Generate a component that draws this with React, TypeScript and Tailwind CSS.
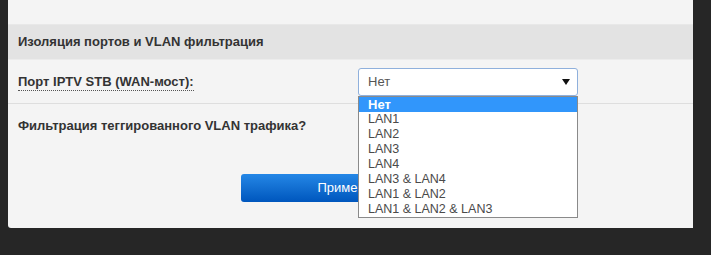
import React from 'react';

const options = ['Нет', 'LAN1', 'LAN2', 'LAN3', 'LAN4', 'LAN3 & LAN4', 'LAN1 & LAN2', 'LAN1 & LAN2 & LAN3'];

export default function App() {
  return (
    <div className="w-[711px] h-[255px] bg-[#262626] pl-2 overflow-hidden" style={{ fontFamily: '"Liberation Sans", Arial, sans-serif' }}>
      <div className="w-[685px] bg-[#f4f4f4] rounded-bl-[3px] pb-[26px]">
        <div className="h-6" />
        <div className="h-9 bg-[#e3e3e3] border-t border-[#e8e8e8] border-b border-b-[#ececec] flex items-center px-[10px]">
          <span className="text-[13px] font-bold text-[#333]">Изоляция портов и VLAN фильтрация</span>
        </div>
        <div className="h-11 flex items-center px-[10px] border-b border-[#dedede]">
          <span className="w-[340px] text-[13px] font-bold text-[#333]">
            <span className="border-b border-dotted border-[#555] pb-[1px]">Порт IPTV STB (WAN-мост):</span>
          </span>
          <div className="relative">
            <div className="w-[220px] h-7 bg-white border border-[#8fb0dc] rounded-[3px] flex items-center justify-between pl-[9px] pr-[7px]">
              <span className="text-[13px] text-[#555]">Нет</span>
              <svg width="8" height="6" viewBox="0 0 8 6"><path d="M0 0h8L4 6z" fill="#111" /></svg>
            </div>
            <div className="absolute left-0 top-[28px] w-[220px] bg-white border border-[#8a8a8a] z-10">
              {options.map((o, i) => (
                <div
                  key={o}
                  className={
                    i === 0
                      ? 'h-[15px] leading-[15px] pl-[9px] text-[13px] font-bold bg-[#3196fb] text-white'
                      : 'h-[15px] leading-[15px] pl-[9px] text-[12.5px] text-[#4a4a4a]'
                  }
                >
                  {o}
                </div>
              ))}
            </div>
          </div>
        </div>
        <div className="h-11 flex items-center px-[10px]">
          <span className="text-[13px] font-bold text-[#333]">Фильтрация теггированного VLAN трафика?</span>
        </div>
        <div className="pt-[26px] pl-[233px]">
          <button className="w-[220px] h-7 rounded-[3px] bg-gradient-to-b from-[#2487e6] to-[#0056bd] text-white text-[13px]">
            Применить
          </button>
        </div>
      </div>
    </div>
  );
}
